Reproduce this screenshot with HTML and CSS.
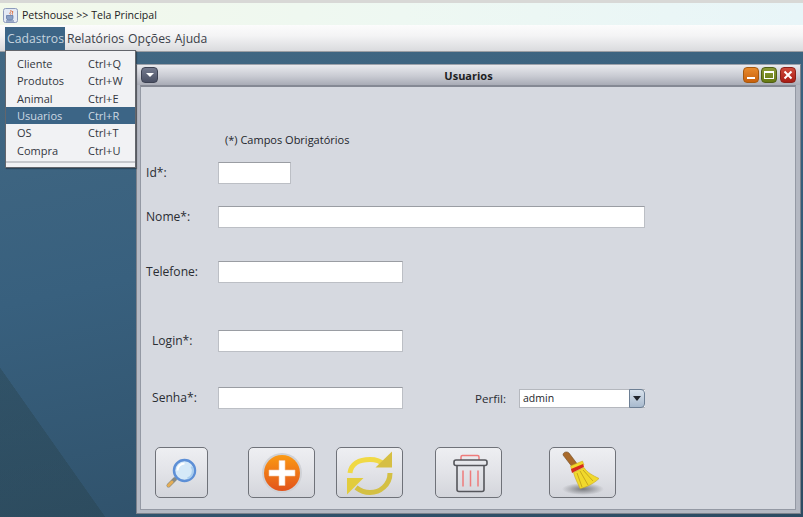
FILE: index.html
```html
<!DOCTYPE html>
<html>
<head>
   <title>Petshouse >> Tela Principal</title>
   <meta name="viewport" content="width=device-width, initial-scale=1">
   <link rel="stylesheet" href="styles.css">
</head>
<body>
   <div class="titlebar">
      <svg class="app-icon" width="15" height="15" viewBox="0 0 15 15">
         <rect x="0.5" y="0.5" width="14" height="14" rx="2" fill="#e3e9f4" stroke="#8c9abb"/>
         <path d="M7.500 2c2 2-2 2.500 0 4.500M9.500 3c1 1.500-1 2 0 3.500" fill="none" stroke="#d9602a"/>
         <path d="M3.500 7.500h6.500v2.500a2 2 0 0 1-2 2H5.500a2 2 0 0 1-2-2z" fill="#8aa0c4" stroke="#56709f" stroke-width="0.700"/>
         <path d="M3 13h8" stroke="#56709f"/>
      </svg>
      <span>Petshouse &gt;&gt; Tela Principal</span>
   </div>

   <div class="menubar">
      <span class="menu menu-open">Cadastros</span>
      <span class="menu">Relatórios</span>
      <span class="menu">Opções</span>
      <span class="menu">Ajuda</span>
   </div>

   <div class="desktop">
      <div class="frame">
         <div class="frame-title">
            <div class="frame-left"><span class="frame-menu"></span></div>
            <span class="frame-name">Usuarios</span>
            <div class="frame-right">
               <span class="ctl ctl-min"><svg width="16" height="16" viewBox="0 0 16 16"><rect x="4" y="10" width="8" height="2" fill="#fff"/></svg></span>
               <span class="ctl ctl-max"><svg width="16" height="16" viewBox="0 0 16 16"><rect x="3.500" y="4.500" width="9" height="7" fill="none" stroke="#fff"/><rect x="3" y="4" width="10" height="2" fill="#fff"/></svg></span>
               <span class="ctl ctl-close"><svg width="16" height="16" viewBox="0 0 16 16"><path d="M4.500 4.500l7 7M11.500 4.500l-7 7" stroke="#fff" stroke-width="2"/></svg></span>
            </div>
         </div>

         <div class="panel">
            <p class="note">(*) Campos Obrigatórios</p>

            <div class="row row-id">
               <label class="lbl">Id*:</label>
               <input class="field field-id" type="text">
            </div>
            <div class="row row-nome">
               <label class="lbl">Nome*:</label>
               <input class="field field-nome" type="text">
            </div>
            <div class="row row-fone">
               <label class="lbl">Telefone:</label>
               <input class="field field-mid" type="text">
            </div>
            <div class="row row-login">
               <label class="lbl lbl-in">Login*:</label>
               <input class="field field-mid" type="text">
            </div>
            <div class="row row-senha">
               <label class="lbl lbl-in">Senha*:</label>
               <input class="field field-mid" type="password">
               <label class="lbl-perfil">Perfil:</label>
               <div class="combo">
                  <span class="combo-value">admin</span>
                  <span class="combo-arrow"></span>
               </div>
            </div>

            <div class="buttons">
               <button class="btn btn-search">
                  <svg width="40" height="40" viewBox="0 0 40 40">
                     <path d="M13 26L6.500 32.500" stroke="#8a8a80" stroke-width="4" stroke-linecap="round"/>
                     <path d="M10 29L6.500 32.500" stroke="#e5ad55" stroke-width="3" stroke-linecap="round"/>
                     <circle cx="22.500" cy="17.500" r="10.500" fill="#d5e9f8" stroke="#5d8fd6" stroke-width="2.500"/>
                     <path d="M15.500 17.500a7 7 0 0 1 7-7" fill="none" stroke="#fff" stroke-width="2"/>
                     <path d="M29.500 13.500a8 8 0 0 1-4 12" fill="none" stroke="#a9cdee" stroke-width="2"/>
                  </svg>
               </button>
               <button class="btn btn-add">
                  <svg width="42" height="42" viewBox="0 0 42 42">
                     <defs>
                        <linearGradient id="addFill" x1="0" y1="0" x2="0" y2="1">
                           <stop offset="0" stop-color="#fb9a14"/>
                           <stop offset="1" stop-color="#e2531b"/>
                        </linearGradient>
                     </defs>
                     <circle cx="21" cy="21" r="20" fill="#cfd1d6"/>
                     <circle cx="21" cy="21" r="18" fill="url(#addFill)"/>
                     <path d="M18 8.500h6v9.500h10v6H24v9.500h-6V24H8v-6h10z" fill="#fff" stroke="#f3c9a8" stroke-width="0.600"/>
                  </svg>
               </button>
               <button class="btn btn-sync">
                  <svg width="48" height="46" viewBox="0 0 48 46">
                     <path d="M4 23C5 14 13 9.500 24 9.500c5 0 10 1 14 5" fill="none" stroke="#f0d944" stroke-width="5"/>
                     <path d="M46 1.500v16H29.500z" fill="#d6bf43"/>
                     <path d="M44 23c0 12-10 19.500-20 19.500-6 0-10-2-14-5" fill="none" stroke="#d4c043" stroke-width="5"/>
                     <path d="M1 44.500V28h16.500z" fill="#e2cc3d"/>
                  </svg>
               </button>
               <button class="btn btn-trash">
                  <svg width="38" height="42" viewBox="0 0 38 42">
                     <path d="M11 8V5A1.500 1.500 0 0 1 12.500 3.500h15A1.500 1.500 0 0 1 29 5V8" fill="none" stroke="#ee7b7b" stroke-width="1.500"/>
                     <rect x="4" y="8" width="33" height="5.500" rx="2" fill="none" stroke="#55565b" stroke-width="1.600"/>
                     <path d="M7 13.500v24a2 2 0 0 0 2 2h23a2 2 0 0 0 2-2v-24" fill="none" stroke="#55565b" stroke-width="1.600"/>
                     <path d="M13 18.500v16M20.500 18.500v16M28 18.500v16" stroke="#ee7b7b" stroke-width="1.500"/>
                  </svg>
               </button>
               <button class="btn btn-broom">
                  <svg width="52" height="48" viewBox="0 0 52 48">
                     <defs>
                        <radialGradient id="broomShadow">
                           <stop offset="0" stop-color="#77797d"/>
                           <stop offset="1" stop-color="#77797d" stop-opacity="0"/>
                        </radialGradient>
                     </defs>
                     <ellipse cx="26" cy="40" rx="21" ry="6" fill="url(#broomShadow)"/>
                     <path d="M6 6c0-3 4-4 6-2l9 12-5 3z" fill="#a8692a" stroke="#6f4a20" stroke-width="0.600"/>
                     <path d="M13.500 17l12-5 1.500 4-12 6z" fill="#f1d92c" stroke="#c8a81c" stroke-width="0.500"/>
                     <path d="M14 20l12-5 1 3-12 6z" fill="#d62a1e"/>
                     <path d="M16.500 23.500l10.500-5c3 5 9 8 15 11-5 5-13 9-19 10-2-5-5-10-6.500-16z" fill="#f1d92c" stroke="#c8a81c" stroke-width="0.600"/>
                     <path d="M20 24l5 14M23 22l8 14M26 21l10 11" stroke="#c8a81c" fill="none"/>
                  </svg>
               </button>
            </div>
         </div>
      </div>

      <!-- Cadastros menu, open over the desktop -->
      <div class="dropdown">
         <div class="item"><span class="item-name">Cliente</span><span>Ctrl+Q</span></div>
         <div class="item"><span class="item-name">Produtos</span><span>Ctrl+W</span></div>
         <div class="item"><span class="item-name">Animal</span><span>Ctrl+E</span></div>
         <div class="item item-active"><span class="item-name">Usuarios</span><span>Ctrl+R</span></div>
         <div class="item"><span class="item-name">OS</span><span>Ctrl+T</span></div>
         <div class="item"><span class="item-name">Compra</span><span>Ctrl+U</span></div>
         <div class="sep"></div>
      </div>
   </div>
</body>
</html>
```

FILE: styles.css
```css
* {
   box-sizing: border-box;
}
html, body {
   height: 100%;
}
body {
   margin: 0;
   display: flex;
   flex-direction: column;
   overflow: hidden;
   font-family: "Open Sans", "DejaVu Sans", sans-serif;
   font-size: 12px;
   color: #2b2f36;
   background: #3a6080;
}
.titlebar {
   height: 25px;
   display: flex;
   align-items: center;
   gap: 4px;
   padding: 2px 0 0 3px;
   font-size: 10.600px;
   color: #222;
   background: linear-gradient(90deg, #f2f8ea, #eef8f2 50%, #e8f5f8);
   border-top: 3px solid #d8d8d6;
}
.menubar {
   height: 27px;
   display: flex;
   padding: 2px 0 0 5px;
   font-size: 12.200px;
   background: linear-gradient(#fcfcfc, #f4f4f5 40%, #dadbde);
   border-bottom: 1px solid #9b9ea3;
}
.menu {
   padding: 0 2px;
   line-height: 23px;
   height: 23px;
   color: #3b4048;
}
.menu-open {
   width: 60px;
   color: #c6d4df;
   background: #3c6586;
}
.desktop {
   flex: 1;
   position: relative;
   padding: 12px 2px 3px 136px;
   background:
      linear-gradient(to top right, rgba(36, 58, 62, 0.3) 50%, transparent 50.300%) left bottom / 105px 149px no-repeat,
      linear-gradient(168deg, #426883, #38607e 40%, #2c4b62);
}
.frame {
   height: 100%;
   display: flex;
   flex-direction: column;
   padding: 0 4px 3px 3px;
   background: #b4b8c2;
   border: 1px solid #7d828c;
   border-top-color: #9ea2ab;
}
.frame-title {
   height: 20px;
   margin: 0 -4px 0 -3px;
   padding: 0 4px;
   display: grid;
   grid-template-columns: 1fr auto 1fr;
   align-items: center;
   background: linear-gradient(#e9eaee, #c9cbd3 55%, #a9acb6);
}
.frame-left {
   display: flex;
}
.frame-right {
   display: flex;
   justify-content: flex-end;
}
.frame-menu {
   width: 17px;
   height: 16px;
   border-radius: 4px;
   position: relative;
   background: linear-gradient(#747a8e, #4a5064);
   border: 1px solid #3d4253;
}
.frame-menu::after {
   content: "";
   position: absolute;
   left: 4px;
   top: 5px;
   border-left: 4px solid transparent;
   border-right: 4px solid transparent;
   border-top: 4px solid #fff;
}
.frame-name {
   font-size: 11px;
   font-weight: bold;
   color: #1c1d22;
}
.ctl {
   width: 16px;
   height: 16px;
   margin-left: 2px;
   border-radius: 4px;
   display: flex;
}
.ctl-min {
   background: linear-gradient(#e88a2c, #c9600c);
   border: 1px solid #a5590f;
}
.ctl-max {
   background: linear-gradient(#8c9c38, #667a12);
   border: 1px solid #4f5e16;
}
.ctl-close {
   margin-left: 3px;
   background: linear-gradient(#cf4b3c, #a81c14);
   border: 1px solid #8b2019;
}
.ctl svg {
   margin: -1px;
}
.panel {
   flex: 1;
   padding: 0 0 0 5px;
   background: #d6d9e0;
   border-top: 2px solid #858994;
   border-left: 1px solid #9499a4;
   border-right: 1px solid #9499a4;
   border-bottom: 1px solid #9499a4;
}
.note {
   margin: 44px 0 0 79px;
   height: 18px;
   line-height: 18px;
   font-size: 11px;
   color: #23252b;
}
.row {
   display: flex;
   align-items: center;
   height: 22px;
}
.row-id {
   margin-top: 13px;
}
.row-nome {
   margin-top: 22px;
}
.row-fone {
   margin-top: 33px;
}
.row-login {
   margin-top: 47px;
}
.row-senha {
   margin-top: 35px;
}
.lbl {
   width: 72px;
   margin-top: -1px;
   font-size: 12.100px;
   color: #2a2d33;
}
.lbl-in {
   padding-left: 6px;
}
.field {
   height: 22px;
   padding: 0;
   background: #fff;
   border: 1px solid #bcbfc5;
   border-top-color: #9a9da3;
   border-radius: 0;
   outline: none;
}
.field-id {
   width: 73px;
}
.field-nome {
   width: 427px;
}
.field-mid {
   width: 185px;
}
.lbl-perfil {
   margin-left: 72px;
   width: 44px;
   font-size: 11.600px;
   color: #2a2d33;
}
.combo {
   width: 126px;
   height: 19px;
   margin-top: 1px;
   display: flex;
   background: #fff;
   border: 1px solid #b5b8be;
   border-right: 0;
}
.combo-value {
   flex: 1;
   padding-left: 3px;
   line-height: 17px;
   font-size: 10.500px;
   color: #23252b;
}
.combo-arrow {
   width: 16px;
   margin: -1px 0;
   position: relative;
   border: 1px solid #6d7f94;
   border-radius: 0 4px 4px 0;
   background: linear-gradient(#d9e2ec, #a8bace);
}
.combo-arrow::after {
   content: "";
   position: absolute;
   left: 3px;
   top: 6px;
   border-left: 4px solid transparent;
   border-right: 4px solid transparent;
   border-top: 5px solid #22252c;
}
.buttons {
   display: flex;
   margin: 38px 0 0 9px;
}
.btn {
   height: 51px;
   width: 67px;
   padding: 0;
   display: flex;
   align-items: center;
   justify-content: center;
   background: linear-gradient(#eeeff2, #e2e3e8 50%, #d3d5db);
   border: 1px solid #6f7279;
   border-radius: 5px;
}
.btn-search {
   width: 53px;
}
.btn-add {
   margin-left: 40px;
}
.btn-sync {
   margin-left: 21px;
}
.btn-trash {
   margin-left: 32px;
}
.btn-broom {
   margin-left: 47px;
}
.dropdown {
   position: absolute;
   left: 5px;
   top: -2px;
   width: 131px;
   height: 118px;
   padding-top: 4px;
   background: #f1f2f4;
   border: 1px solid #63666c;
   font-size: 11px;
   box-shadow: 1px 1px 1px rgba(0, 0, 0, 0.3);
}
.item {
   height: 17.300px;
   display: flex;
   align-items: center;
   padding-left: 11px;
   color: #33373e;
}
.item-name {
   width: 71px;
}
.item-active {
   color: #cdd9e3;
   background: #3c6586;
}
.sep {
   margin-top: 2px;
   height: 2px;
   background: #c6c8cc;
}
```
